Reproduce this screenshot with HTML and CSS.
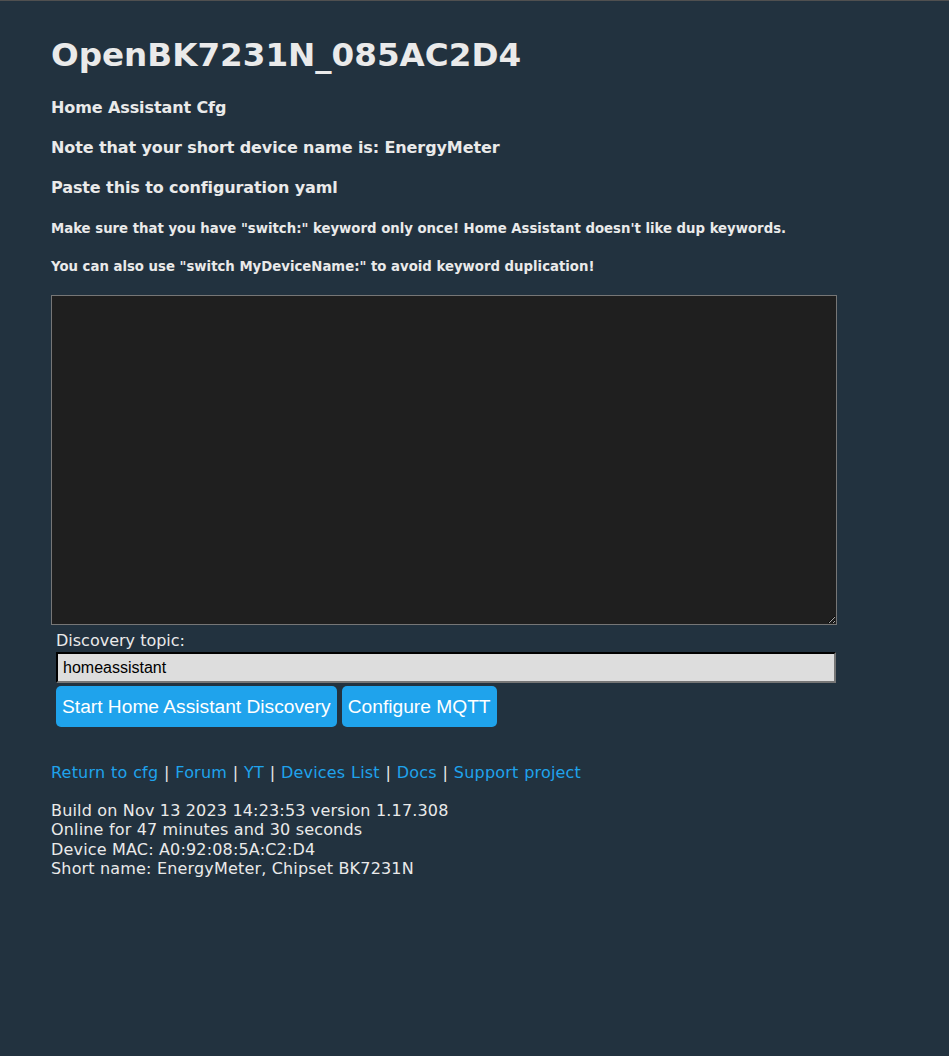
FILE: index.html
```html
<!DOCTYPE html>
<html lang="en">
<head>
    <meta charset="UTF-8">
    <title>OpenBK7231N_085AC2D4</title>
    <link rel="stylesheet" href="styles.css">
</head>
<body>
    <div class="main">
        <h1 class="title">OpenBK7231N_085AC2D4</h1>
        <h4>Home Assistant Cfg</h4>
        <h4>Note that your short device name is: EnergyMeter</h4>
        <h4>Paste this to configuration yaml</h4>
        <h5>Make sure that you have "switch:" keyword only once! Home Assistant doesn't like dup keywords.</h5>
        <h5 class="last">You can also use "switch MyDeviceName:" to avoid keyword duplication!</h5>

        <textarea class="yaml" rows="20" cols="80"></textarea>

        <!-- discovery form -->
        <form class="discovery">
            <label for="prefix">Discovery topic:</label>
            <input type="text" id="prefix" value="homeassistant">
            <div class="buttons">
                <button type="button">Start Home Assistant Discovery</button>
                <button type="button">Configure MQTT</button>
            </div>
        </form>

        <div class="links">
            <a href="#">Return to cfg</a> | <a href="#">Forum</a> | <a href="#">YT</a> | <a href="#">Devices List</a> | <a href="#">Docs</a> | <a href="#">Support project</a>
        </div>

        <div class="info">
            Build on Nov 13 2023 14:23:53 version 1.17.308<br>
            Online for 47 minutes and 30 seconds<br>
            Device MAC: A0:92:08:5A:C2:D4<br>
            Short name: EnergyMeter, Chipset BK7231N
        </div>
    </div>
</body>
</html>
```

FILE: styles.css
```css
* {
    box-sizing: border-box;
}

html {
    background: #22323f;
}

body {
    margin: 0;
    min-height: 1056px;
    border-top: 1px solid #505050;
    background: #22323f;
    color: #eaeaea;
    font-family: "DejaVu Sans", Verdana, sans-serif;
    font-size: 16px;
}

.main {
    padding: 0 51px;
}

.title {
    font-size: 32.6px;
    line-height: 37px;
    margin: 36px 0 0;
}

h4 {
    font-size: 16px;
    line-height: 19px;
    margin: 21px 0 0;
    letter-spacing: -0.1px;
}

.title + h4 {
    margin-top: 24px;
}

h5 {
    font-size: 13.28px;
    line-height: 16px;
    margin: 22px 0 0;
}

h4 + h5 {
    margin-top: 24px;
}

.yaml {
    display: block;
    margin: 20px 0 0;
    width: 786px;
    height: 330px;
    padding: 5px;
    resize: vertical;
    background: #1f1f1f;
    color: #65c115;
    border: 1px solid #767676;
}

.discovery {
    padding: 5px;
    margin: 1px 0 0;
    width: 790px;
}

.discovery label {
    display: block;
    line-height: 19px;
}

.discovery input {
    display: block;
    width: 780px;
    height: 31px;
    margin: 2px 0 3px;
    padding: 3px 5px;
    background: #dddddd;
    color: #000;
    font-family: "Liberation Sans", Arial, sans-serif;
    font-size: 16px;
    border: 2px inset #767676;
    border-top-color: #1e1e1e;
    border-left-color: #1e1e1e;
}

.buttons {
    display: flex;
    gap: 5px;
}

.buttons button {
    border: 0;
    border-radius: 5px;
    background: #1fa3ec;
    color: #fff;
    height: 41px;
    padding: 0 6px;
    font-family: "Liberation Sans", Arial, sans-serif;
    font-size: 19.2px;
    cursor: pointer;
}

.links {
    margin-top: 31px;
    line-height: 19px;
    letter-spacing: 0.2px;
    word-spacing: 0.4px;
}

a {
    color: #1fa3ec;
    text-decoration: none;
}

.info {
    margin-top: 19px;
    line-height: 19.4px;
    letter-spacing: 0.17px;
}
```
